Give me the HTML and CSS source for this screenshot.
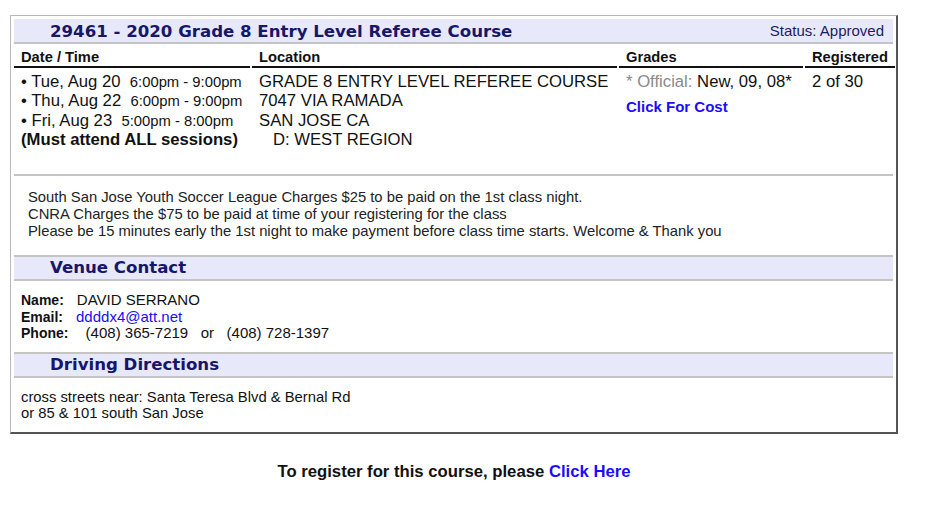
FILE: index.html
```html
<!DOCTYPE html>
<html lang="en">
  <head>
    <meta charset="UTF-8" />
    <meta name="viewport" content="width=device-width, initial-scale=1.0" />
    <title>29461 - 2020 Grade 8 Entry Level Referee Course</title>
    <link rel="stylesheet" href="styles.css">
  </head>
  <body>
    <div class="course">
      <div class="title-bar">
        <h1>29461 - 2020 Grade 8 Entry Level Referee Course</h1>
        <span class="status">Status: Approved</span>
      </div>

      <div class="sessions">
        <div class="th">Date / Time</div>
        <div class="th">Location</div>
        <div class="th">Grades</div>
        <div class="th">Registered</div>

        <div class="td dates">
          <div>&bull; Tue, Aug 20&nbsp;&nbsp;<span class="time">6:00pm - 9:00pm</span></div>
          <div>&bull; Thu, Aug 22&nbsp;&nbsp;<span class="time">6:00pm - 9:00pm</span></div>
          <div>&bull; Fri, Aug 23&nbsp;&nbsp;<span class="time">5:00pm - 8:00pm</span></div>
          <div class="must">(Must attend ALL sessions)</div>
        </div>
        <div class="td">
          <div>GRADE 8 ENTRY LEVEL REFEREE COURSE</div>
          <div>7047 VIA RAMADA</div>
          <div>SAN JOSE CA</div>
          <div>&nbsp;&nbsp;&nbsp;D: WEST REGION</div>
        </div>
        <div class="td">
          <div><span class="muted">* Official:</span> New, 09, 08*</div>
          <a class="cost" href="#">Click For Cost</a>
        </div>
        <div class="td">2 of 30</div>
      </div>

      <div class="notes">
        South San Jose Youth Soccer League Charges $25 to be paid on the 1st class night.<br>
        CNRA Charges the $75 to be paid at time of your registering for the class<br>
        Please be 15 minutes early the 1st night to make payment before class time starts. Welcome &amp; Thank you
      </div>

      <h2 class="section-bar">Venue Contact</h2>
      <div class="contact">
        <div><span class="label">Name:</span>DAVID SERRANO</div>
        <div><span class="label">Email:</span><a href="#">ddddx4@att.net</a></div>
        <div><span class="label">Phone:</span>&nbsp;(408) 365-7219&nbsp;&nbsp;&nbsp;or&nbsp;&nbsp;&nbsp;(408) 728-1397</div>
      </div>

      <h2 class="section-bar">Driving Directions</h2>
      <div class="directions">
        cross streets near: Santa Teresa Blvd &amp; Bernal Rd<br>
        or 85 &amp; 101 south San Jose
      </div>
    </div>

    <p class="register">To register for this course, please <a href="#">Click Here</a></p>
  </body>
</html>
```

FILE: styles.css
```css
* {
  margin: 0;
  padding: 0;
  box-sizing: border-box;
}

body {
  font-family: "Liberation Sans", Arial, sans-serif;
  color: #111;
  background: #fff;
  padding: 15px 0 0 10px;
}

a {
  color: #1a0dff;
  text-decoration: none;
}

/* BOX */
.course {
  width: 888px;
  padding: 3px;
  border-top: 1px solid #b8b8b8;
  border-left: 1px solid #b8b8b8;
  border-right: 2px solid #555;
  border-bottom: 2px solid #555;
}

.title-bar {
  display: flex;
  justify-content: space-between;
  align-items: center;
  height: 25px;
  padding: 0 9px 0 36px;
  background-color: #e8e8fb;
  border-bottom: 2px solid #c4c4c4;
}

h1,
.section-bar {
  font-family: "DejaVu Sans", Verdana, sans-serif;
  font-size: 16.6px;
  font-weight: bold;
  color: #16166a;
}

h1 {
  padding-top: 2px;
}

.status {
  font-size: 15px;
  color: #1c1c5e;
}

/* SESSIONS TABLE */
.sessions {
  display: grid;
  grid-template-columns: 236px 365px 184px 1fr;
  column-gap: 2px;
  margin-bottom: 25px;
}

.th {
  font-size: 14.7px;
  font-weight: bold;
  line-height: 17px;
  padding: 5px 7px 0;
  border-bottom: 2px solid #111;
}

.td {
  font-size: 16.7px;
  line-height: 19.3px;
  padding: 4px 7px 0;
}

.dates {
  white-space: nowrap;
  padding-right: 0;
}

.dates > div {
  height: 19.3px;
}

.time {
  font-size: 14.8px;
  line-height: 1;
}

.must {
  font-weight: bold;
}

.muted {
  color: #8a8a8a;
}

.cost {
  display: block;
  margin-top: 6px;
  font-size: 15px;
  font-weight: bold;
}

/* NOTES */
.notes {
  font-size: 14.8px;
  line-height: 17px;
  color: #222;
  padding: 13px 14px 15px;
  border-top: 2px solid #c4c4c4;
}

.section-bar {
  height: 26px;
  line-height: 22px;
  padding-left: 36px;
  background-color: #e8e8fb;
  border-top: 2px solid #c4c4c4;
  border-bottom: 2px solid #c4c4c4;
}

.contact {
  font-size: 15px;
  line-height: 16.5px;
  padding: 11px 7px 10px;
}

.label {
  font-size: 14px;
  font-weight: bold;
  margin-right: 13px;
}

.directions {
  font-size: 14.8px;
  line-height: 16px;
  padding: 11px 7px 8px;
}

.register {
  width: 888px;
  margin-top: 28px;
  text-align: center;
  font-size: 16.7px;
  font-weight: bold;
  line-height: 19px;
}
```
